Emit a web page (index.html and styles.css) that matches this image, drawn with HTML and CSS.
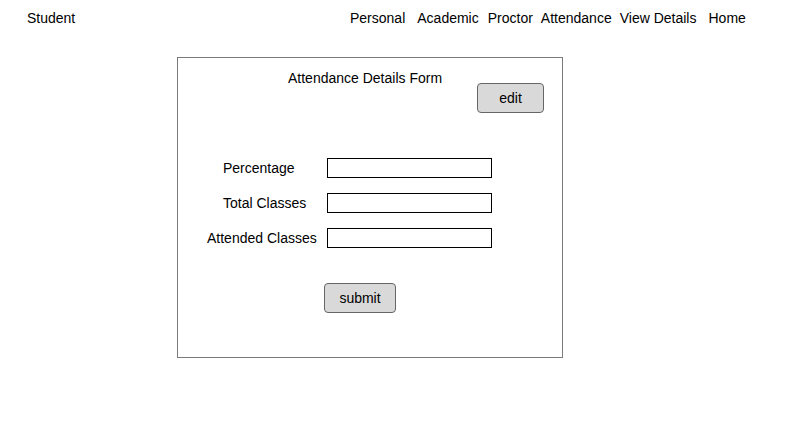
FILE: index.html
```html
<!DOCTYPE html>
<html lang="en">
<head>
<meta charset="utf-8">
<title>Attendance Details Form</title>
<link rel="stylesheet" href="styles.css">
</head>
<body>
<header class="topbar">
  <div class="brand">Student</div>
  <nav class="nav">
    <a class="nav-item nav-personal">Personal</a>
    <a class="nav-item nav-academic">Academic</a>
    <a class="nav-item nav-proctor">Proctor</a>
    <a class="nav-item nav-attendance">Attendance</a>
    <a class="nav-item nav-view">View Details</a>
    <a class="nav-item nav-home">Home</a>
  </nav>
</header>
<main class="card">
  <div class="card-head">
    <div class="card-title">Attendance Details Form</div>
    <button class="btn btn-edit">edit</button>
  </div>
  <form class="fields">
    <div class="field">
      <label class="field-label">Percentage</label>
      <input class="field-input" type="text">
    </div>
    <div class="field">
      <label class="field-label">Total Classes</label>
      <input class="field-input" type="text">
    </div>
    <div class="field">
      <label class="field-label field-label-wide">Attended Classes</label>
      <input class="field-input" type="text">
    </div>
    <div class="actions">
      <button class="btn btn-submit" type="button">submit</button>
    </div>
  </form>
</main>
</body>
</html>
```
FILE: styles.css
```css
* { box-sizing: border-box; }
html, body { margin: 0; padding: 0; background: #fff; }
body {
  font-family: "Liberation Sans", Arial, sans-serif;
  font-size: 14px;
  line-height: 16px;
  color: #000;
}
.topbar {
  display: flex;
  padding: 10px 0 0 27px;
  height: 57px;
}
.brand { width: 323px; }
.nav { display: flex; }
.nav-item { color: #000; text-decoration: none; }
.nav-academic { margin-left: 12px; }
.nav-proctor { margin-left: 9px; }
.nav-attendance { margin-left: 8px; }
.nav-view { margin-left: 8px; }
.nav-home { margin-left: 12px; }

.card {
  margin-left: 177px;
  width: 386px;
  height: 301px;
  border: 1px solid #7a7a7a;
}
.card-head {
  display: flex;
  align-items: flex-start;
  padding-top: 12px;
}
.card-title {
  padding-left: 110px;
  width: 299px;
}
.btn {
  font-family: "Liberation Sans", Arial, sans-serif;
  font-size: 14px;
  line-height: 16px;
  color: #000;
  background: #d9d9d9;
  border: 1px solid #666;
  border-radius: 4px;
  padding: 0;
  height: 30px;
}
.btn-edit {
  width: 67px;
  margin-top: 13px;
}
.fields {
  display: flex;
  flex-direction: column;
  gap: 15px;
  margin: 45px 0 0 0;
}
.field {
  display: flex;
  align-items: center;
  height: 20px;
}
.field-label {
  width: 149px;
  padding-left: 45px;
}
.field-label-wide { padding-left: 29px; }
.field-input {
  width: 165px;
  height: 20px;
  border: 1px solid #000;
  margin: 0;
  padding: 0;
  background: #fff;
}
.actions {
  margin-top: 20px;
  padding-left: 146px;
}
.btn-submit { width: 72px; }
```
